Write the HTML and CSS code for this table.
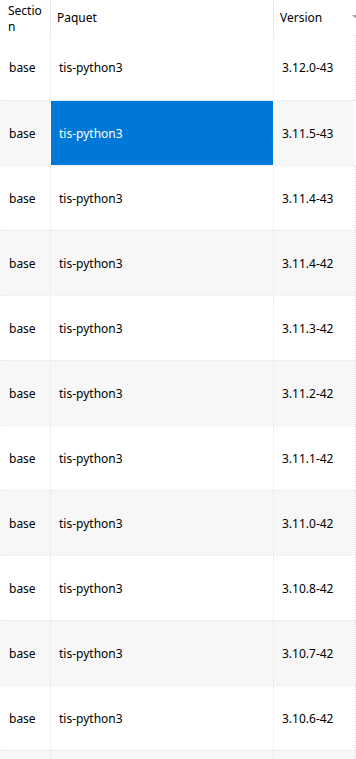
FILE: index.html
```html
<!DOCTYPE html>
<html>
<head>
<meta charset="utf-8">
<link rel="stylesheet" href="styles.css">
</head>
<body>
<div class="grid">
  <div class="row header">
    <div class="cell hsec">Section</div>
    <div class="cell">Paquet</div>
    <div class="cell hver">Version<span class="sort"></span></div>
  </div>
  <div class="row first"><div class="cell c1">base</div><div class="cell c2">tis-python3</div><div class="cell c3">3.12.0-43</div></div>
  <div class="row alt selected"><div class="cell c1">base</div><div class="cell c2">tis-python3</div><div class="cell c3">3.11.5-43</div></div>
  <div class="row"><div class="cell c1">base</div><div class="cell c2">tis-python3</div><div class="cell c3">3.11.4-43</div></div>
  <div class="row alt"><div class="cell c1">base</div><div class="cell c2">tis-python3</div><div class="cell c3">3.11.4-42</div></div>
  <div class="row"><div class="cell c1">base</div><div class="cell c2">tis-python3</div><div class="cell c3">3.11.3-42</div></div>
  <div class="row alt"><div class="cell c1">base</div><div class="cell c2">tis-python3</div><div class="cell c3">3.11.2-42</div></div>
  <div class="row"><div class="cell c1">base</div><div class="cell c2">tis-python3</div><div class="cell c3">3.11.1-42</div></div>
  <div class="row alt"><div class="cell c1">base</div><div class="cell c2">tis-python3</div><div class="cell c3">3.11.0-42</div></div>
  <div class="row"><div class="cell c1">base</div><div class="cell c2">tis-python3</div><div class="cell c3">3.10.8-42</div></div>
  <div class="row alt"><div class="cell c1">base</div><div class="cell c2">tis-python3</div><div class="cell c3">3.10.7-42</div></div>
  <div class="row"><div class="cell c1">base</div><div class="cell c2">tis-python3</div><div class="cell c3">3.10.6-42</div></div>
  <div class="row alt"><div class="cell c1"></div><div class="cell c2"></div><div class="cell c3"></div></div>
</div>
</body>
</html>
```

FILE: styles.css
```css
html, body {
  margin: 0;
  padding: 0;
  background: #ffffff;
  overflow: hidden;
}
body {
  font-family: "Noto Sans", "Open Sans", sans-serif;
  font-size: 12px;
  color: #000000;
}
.grid {
  width: 356px;
  height: 759px;
  overflow: hidden;
}
.row {
  display: grid;
  grid-template-columns: 51px 223px 82px;
  height: 65px;
  box-sizing: border-box;
  border-top: 1px dotted #e6e6e6;
}
.row.first {
  border-top: none;
}
.row.alt {
  background: #f7f7f7;
}
.cell {
  display: flex;
  align-items: center;
  padding-left: 8px;
  box-sizing: border-box;
  border-right: 1px dotted #e6e6e6;
  white-space: nowrap;
}
.c1 {
  padding-left: 9px;
}
.row.header {
  height: 35px;
  border-top: none;
}
.header .cell {
  padding-left: 6px;
  border-right: 1px solid #e8e8e8;
  position: relative;
}
.header .hsec {
  align-items: flex-start;
  padding-top: 3px;
  padding-left: 8px;
  padding-right: 4px;
  white-space: normal;
  word-break: break-all;
  line-height: 16px;
}
.header .hver {
  border-right: none;
}
.sort {
  position: absolute;
  left: 78px;
  top: 15px;
  width: 0;
  height: 0;
  border-left: 3px solid transparent;
  border-right: 3px solid transparent;
  border-top: 3px solid #a0a0a0;
}
.selected {
  background: #c0c0c0;
}
.selected .cell {
  border-right: 1px solid #ffffff;
}
.selected .c2 {
  background: #0078d7;
  color: #ffffff;
}
```
